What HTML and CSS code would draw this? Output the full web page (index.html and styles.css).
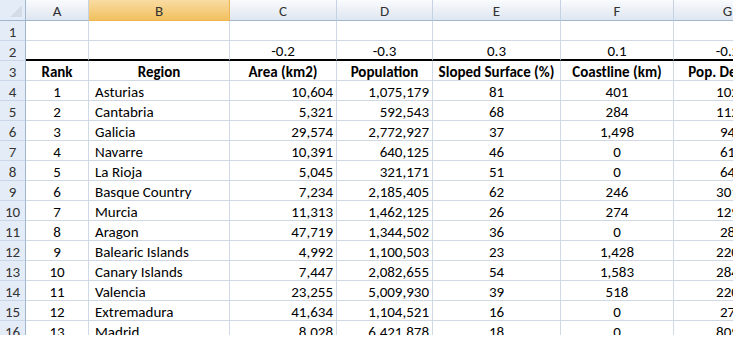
FILE: index.html
```
<!DOCTYPE html>
<html lang="en">
<head>
    <meta charset="UTF-8">
    <title>Regions</title>
    <link rel="stylesheet" href="styles.css">
</head>
<body>
<div class="sheet" id="sheet"></div>
<script>
    document.addEventListener('DOMContentLoaded', function() {
        const sheet = document.getElementById('sheet');
        const letters = ['A', 'B', 'C', 'D', 'E', 'F', 'G'];
        // alignment per column
        const align = ['c', 'l', 'r', 'r', 'c', 'c', 'c'];

        const rows = [
            ['', '', '', '', '', '', ''],
            ['', '', '-0.2', '-0.3', '0.3', '0.1', '-0.2'],
            ['Rank', 'Region', 'Area (km2)', 'Population', 'Sloped Surface (%)', 'Coastline (km)', 'Pop. Density'],
            ['1', 'Asturias', '10,604', '1,075,179', '81', '401', '102'],
            ['2', 'Cantabria', '5,321', '592,543', '68', '284', '112'],
            ['3', 'Galicia', '29,574', '2,772,927', '37', '1,498', '94'],
            ['4', 'Navarre', '10,391', '640,125', '46', '0', '61'],
            ['5', 'La Rioja', '5,045', '321,171', '51', '0', '64'],
            ['6', 'Basque Country', '7,234', '2,185,405', '62', '246', '301'],
            ['7', 'Murcia', '11,313', '1,462,125', '26', '274', '129'],
            ['8', 'Aragon', '47,719', '1,344,502', '36', '0', '28'],
            ['9', 'Balearic Islands', '4,992', '1,100,503', '23', '1,428', '220'],
            ['10', 'Canary Islands', '7,447', '2,082,655', '54', '1,583', '284'],
            ['11', 'Valencia', '23,255', '5,009,930', '39', '518', '220'],
            ['12', 'Extremadura', '41,634', '1,104,521', '16', '0', '27'],
            ['13', 'Madrid', '8,028', '6,421,878', '18', '0', '809']
        ];

        function cell(cls, text) {
            const el = document.createElement('div');
            el.className = cls;
            el.textContent = text;
            sheet.appendChild(el);
        }

        // column headers
        cell('corner', '');
        letters.forEach(function(l) {
            cell(l === 'B' ? 'col-head active' : 'col-head', l);
        });

        rows.forEach(function(row, i) {
            cell('row-head', String(i + 1));
            row.forEach(function(value, j) {
                let cls = 'cell';
                if (i === 1) cls += ' c thick';
                else if (i === 2) cls += ' c bold';
                else cls += ' ' + align[j];
                cell(cls, value);
            });
        });
    });
</script>
</body>
</html>
```

FILE: styles.css
```
* {
    box-sizing: border-box;
    margin: 0;
    padding: 0;
}

body {
    background-color: #fff;
    color: #000;
    font-family: Calibri, Carlito, Lato, 'Liberation Sans', sans-serif;
    font-size: 15px;
}

.sheet {
    width: 733px;
    height: 335px;
    overflow: hidden;
    display: grid;
    grid-template-columns: 26px 63px 141px 107px 96px 128px 113px 108px;
    grid-template-rows: 21px;
    grid-auto-rows: 20px;
}

.corner {
    background-color: #e4ecf7;
    border-right: 1px solid #9eb6ce;
    border-bottom: 1px solid #9eb6ce;
    position: relative;
}

.corner::after {
    content: '';
    position: absolute;
    right: 3px;
    bottom: 3px;
    width: 0;
    height: 0;
    border-left: 12px solid transparent;
    border-bottom: 12px solid #d3dce7;
}

.col-head {
    display: flex;
    align-items: center;
    justify-content: center;
    padding-top: 1px;
    background: linear-gradient(#f9fbfd, #dfe6f0);
    border-right: 1px solid #c5d2e3;
    border-bottom: 1px solid #9eb6ce;
    color: #333;
}

.col-head.active {
    background: linear-gradient(#f9dba3, #f1c15f);
    border-right-color: #f2b552;
    border-bottom-color: #f2b552;
}

.row-head {
    display: flex;
    align-items: flex-end;
    justify-content: center;
    background-color: #e4ecf7;
    border-right: 1px solid #9eb6ce;
    border-bottom: 1px solid #c9d6e8;
    color: #333;
    line-height: 16px;
}

.cell {
    display: flex;
    align-items: flex-end;
    padding: 0 3px;
    border-right: 1px solid #d0d7e5;
    border-bottom: 1px solid #d0d7e5;
    white-space: nowrap;
    overflow: hidden;
    line-height: 16px;
}

.c {
    justify-content: center;
}

.l {
    justify-content: flex-start;
    padding-left: 6px;
}

.r {
    justify-content: flex-end;
}

.bold {
    justify-content: center;
    font-weight: bold;
}

.thick {
    border-bottom: 2px solid #000;
}
```
